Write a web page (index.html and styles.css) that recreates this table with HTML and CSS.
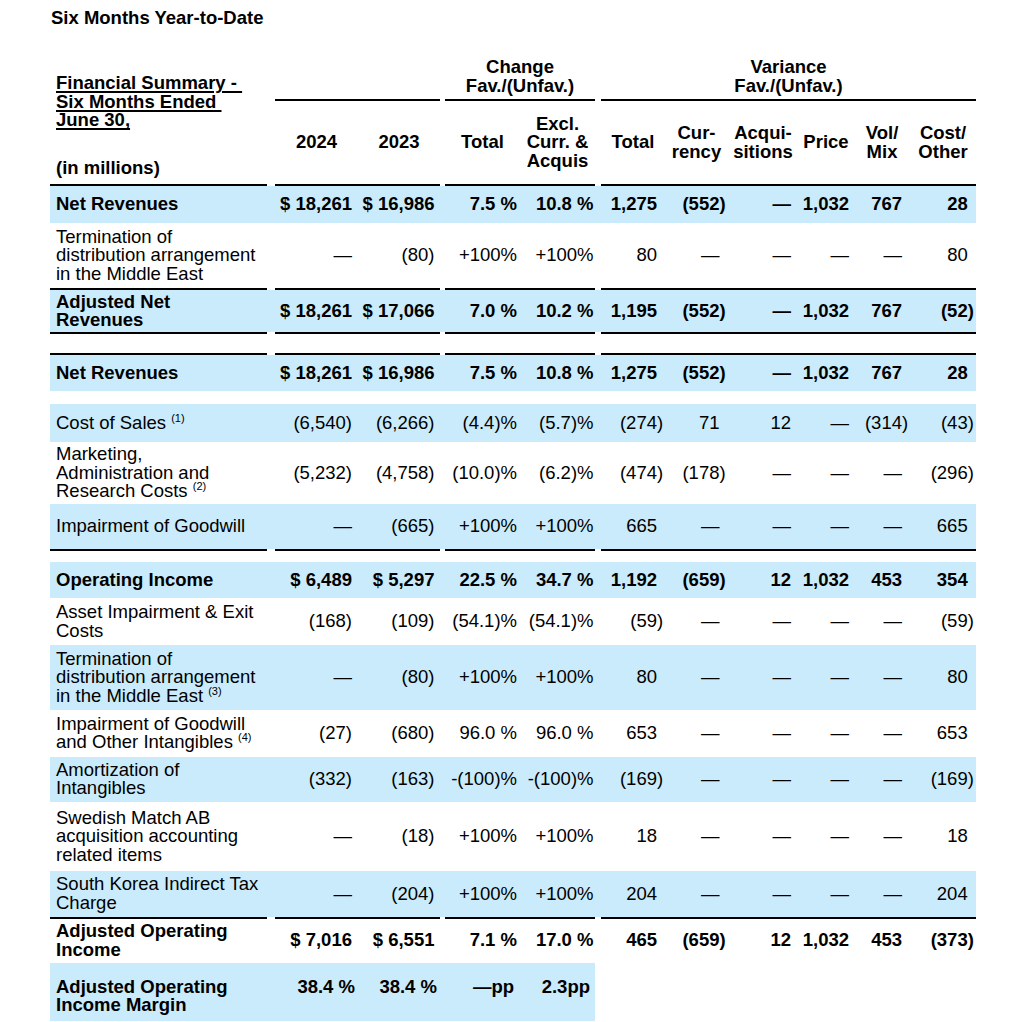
FILE: index.html
```html
<!DOCTYPE html>
<html lang="en">
<head>
<meta charset="utf-8">
<title>Six Months Year-to-Date</title>
<link rel="stylesheet" href="styles.css">
</head>
<body>
<div class="page">
  <div class="title">Six Months Year-to-Date</div>
  <table class="fin">
    <colgroup>
      <col class="c-lbl"><col class="c-g8"><col class="c-y24"><col class="c-y23"><col class="c-g5">
      <col class="c-ct"><col class="c-ce"><col class="c-g6"><col class="c-vt"><col class="c-cur">
      <col class="c-acq"><col class="c-pr"><col class="c-vol"><col class="c-cost">
    </colgroup>
    <tbody>
      <tr class="grouphead">
        <td class="lbl-head" rowspan="3">
          <div class="fs"><span class="u">Financial Summary - </span><br><span class="u">Six Months Ended </span><br><span class="u">June 30,</span></div>
          <div class="units">(in millions)</div>
        </td>
        <td></td>
        <td colspan="2"></td>
        <td></td>
        <td colspan="2">Change<br>Fav./(Unfav.)</td>
        <td></td>
        <td colspan="6">Variance<br>Fav./(Unfav.)</td>
      </tr>
      <tr class="rule">
        <td></td><td class="ln" colspan="2"></td><td></td><td class="ln" colspan="2"></td><td></td><td class="ln" colspan="6"></td>
      </tr>
      <tr class="colhead">
        <td></td>
        <td>2024</td>
        <td>2023</td>
        <td></td>
        <td>Total</td>
        <td>Excl.<br>Curr. &amp;<br>Acquis</td>
        <td></td>
        <td>Total</td>
        <td>Cur-<br>rency</td>
        <td>Acqui-<br>sitions</td>
        <td>Price</td>
        <td>Vol/<br>Mix</td>
        <td>Cost/<br>Other</td>
      </tr>
      <tr class="rule">
        <td class="ln"></td><td></td><td class="ln" colspan="2"></td><td></td><td class="ln" colspan="2"></td><td></td><td class="ln" colspan="6"></td>
      </tr>

      <tr class="row bg b h-nr1">
        <td>Net Revenues</td><td></td><td>$ 18,261</td><td>$ 16,986</td><td></td><td>7.5 %</td><td>10.8 %</td><td></td>
        <td>1,275</td><td><span class="neg">(552)</span></td><td>—</td><td>1,032</td><td>767</td><td>28</td>
      </tr>
      <tr class="row h-term1">
        <td>Termination of<br>distribution arrangement<br>in the Middle East</td><td></td><td>—</td><td>(80)</td><td></td><td>+100%</td><td>+100%</td><td></td>
        <td>80</td><td>—</td><td>—</td><td>—</td><td>—</td><td>80</td>
      </tr>
      <tr class="rule">
        <td class="ln"></td><td></td><td class="ln" colspan="2"></td><td></td><td class="ln" colspan="2"></td><td></td><td class="ln" colspan="6"></td>
      </tr>
      <tr class="row bg b h-anr">
        <td>Adjusted Net<br>Revenues</td><td></td><td>$ 18,261</td><td>$ 17,066</td><td></td><td>7.0 %</td><td>10.2 %</td><td></td>
        <td>1,195</td><td><span class="neg">(552)</span></td><td>—</td><td>1,032</td><td>767</td><td><span class="neg">(52)</span></td>
      </tr>
      <tr class="rule">
        <td class="ln"></td><td></td><td class="ln" colspan="2"></td><td></td><td class="ln" colspan="2"></td><td></td><td class="ln" colspan="6"></td>
      </tr>
      <tr class="spacer sp-a"><td colspan="14"></td></tr>
      <tr class="rule">
        <td class="ln"></td><td></td><td class="ln" colspan="2"></td><td></td><td class="ln" colspan="2"></td><td></td><td class="ln" colspan="6"></td>
      </tr>
      <tr class="row bg b h-nr2">
        <td>Net Revenues</td><td></td><td>$ 18,261</td><td>$ 16,986</td><td></td><td>7.5 %</td><td>10.8 %</td><td></td>
        <td>1,275</td><td><span class="neg">(552)</span></td><td>—</td><td>1,032</td><td>767</td><td>28</td>
      </tr>
      <tr class="spacer sp-b"><td colspan="14"></td></tr>
      <tr class="row bg h-cos">
        <td>Cost of Sales <span class="fn">(1)</span></td><td></td><td>(6,540)</td><td>(6,266)</td><td></td><td>(4.4)%</td><td>(5.7)%</td><td></td>
        <td><span class="neg">(274)</span></td><td>71</td><td>12</td><td>—</td><td><span class="neg">(314)</span></td><td><span class="neg">(43)</span></td>
      </tr>
      <tr class="row h-mkt">
        <td>Marketing,<br>Administration and<br>Research Costs <span class="fn">(2)</span></td><td></td><td>(5,232)</td><td>(4,758)</td><td></td><td>(10.0)%</td><td>(6.2)%</td><td></td>
        <td><span class="neg">(474)</span></td><td><span class="neg">(178)</span></td><td>—</td><td>—</td><td>—</td><td><span class="neg">(296)</span></td>
      </tr>
      <tr class="row bg h-imp">
        <td>Impairment of Goodwill</td><td></td><td>—</td><td>(665)</td><td></td><td>+100%</td><td>+100%</td><td></td>
        <td>665</td><td>—</td><td>—</td><td>—</td><td>—</td><td>665</td>
      </tr>
      <tr class="rule">
        <td class="ln"></td><td></td><td class="ln" colspan="2"></td><td></td><td class="ln" colspan="2"></td><td></td><td class="ln" colspan="6"></td>
      </tr>
      <tr class="spacer sp-c"><td colspan="14"></td></tr>
      <tr class="row bg b h-oi">
        <td>Operating Income</td><td></td><td>$ 6,489</td><td>$ 5,297</td><td></td><td>22.5 %</td><td>34.7 %</td><td></td>
        <td>1,192</td><td><span class="neg">(659)</span></td><td>12</td><td>1,032</td><td>453</td><td>354</td>
      </tr>
      <tr class="row h-asset">
        <td>Asset Impairment &amp; Exit<br>Costs</td><td></td><td>(168)</td><td>(109)</td><td></td><td>(54.1)%</td><td>(54.1)%</td><td></td>
        <td><span class="neg">(59)</span></td><td>—</td><td>—</td><td>—</td><td>—</td><td><span class="neg">(59)</span></td>
      </tr>
      <tr class="row bg h-term2">
        <td>Termination of<br>distribution arrangement<br>in the Middle East <span class="fn">(3)</span></td><td></td><td>—</td><td>(80)</td><td></td><td>+100%</td><td>+100%</td><td></td>
        <td>80</td><td>—</td><td>—</td><td>—</td><td>—</td><td>80</td>
      </tr>
      <tr class="row h-impo">
        <td>Impairment of Goodwill<br>and Other Intangibles <span class="fn">(4)</span></td><td></td><td>(27)</td><td>(680)</td><td></td><td>96.0 %</td><td>96.0 %</td><td></td>
        <td>653</td><td>—</td><td>—</td><td>—</td><td>—</td><td>653</td>
      </tr>
      <tr class="row bg h-amort">
        <td>Amortization of<br>Intangibles</td><td></td><td>(332)</td><td>(163)</td><td></td><td>-(100)%</td><td>-(100)%</td><td></td>
        <td><span class="neg">(169)</span></td><td>—</td><td>—</td><td>—</td><td>—</td><td><span class="neg">(169)</span></td>
      </tr>
      <tr class="row h-swm">
        <td>Swedish Match AB<br>acquisition accounting<br>related items</td><td></td><td>—</td><td>(18)</td><td></td><td>+100%</td><td>+100%</td><td></td>
        <td>18</td><td>—</td><td>—</td><td>—</td><td>—</td><td>18</td>
      </tr>
      <tr class="row bg h-sk">
        <td>South Korea Indirect Tax<br>Charge</td><td></td><td>—</td><td>(204)</td><td></td><td>+100%</td><td>+100%</td><td></td>
        <td>204</td><td>—</td><td>—</td><td>—</td><td>—</td><td>204</td>
      </tr>
      <tr class="rule">
        <td class="ln"></td><td></td><td class="ln" colspan="2"></td><td></td><td class="ln" colspan="2"></td><td></td><td class="ln" colspan="6"></td>
      </tr>
      <tr class="row b h-aoi">
        <td>Adjusted Operating<br>Income</td><td></td><td>$ 7,016</td><td>$ 6,551</td><td></td><td>7.1 %</td><td>17.0 %</td><td></td>
        <td>465</td><td><span class="neg">(659)</span></td><td>12</td><td>1,032</td><td>453</td><td><span class="neg">(373)</span></td>
      </tr>
      <tr class="row bg b margin">
        <td>Adjusted Operating<br>Income Margin</td><td></td><td>38.4 %</td><td>38.4 %</td><td></td><td>—pp</td><td>2.3pp</td>
        <td class="nobg"></td><td class="nobg"></td><td class="nobg"></td><td class="nobg"></td><td class="nobg"></td><td class="nobg"></td><td class="nobg"></td>
      </tr>
    </tbody>
  </table>
</div>
</body>
</html>
```

FILE: styles.css
```css
html, body {
  margin: 0;
  padding: 0;
  background: #ffffff;
}

body {
  font-family: "Liberation Sans", Arial, Helvetica, sans-serif;
  font-size: 18.5px;
  line-height: 18.6px;
  color: #000000;
}

.page {
  padding-top: 8.6px;
}

.title {
  margin-left: 51px;
  font-weight: bold;
}

.fin {
  margin: 30.8px 0 0 50px;
  width: 926px;
  table-layout: fixed;
  border-collapse: collapse;
  border-spacing: 0;
}

.c-lbl { width: 217px; }
.c-g8 { width: 8px; }
.c-y24 { width: 83px; }
.c-y23 { width: 82px; }
.c-g5 { width: 5px; }
.c-ct { width: 75px; }
.c-ce { width: 75px; }
.c-g6 { width: 6px; }
.c-vt { width: 64px; }
.c-cur { width: 63px; }
.c-acq { width: 70px; }
.c-pr { width: 56px; }
.c-vol { width: 56px; }
.c-cost { width: 66px; }

.fin td {
  padding: 0;
  vertical-align: middle;
  white-space: nowrap;
  text-align: right;
}

/* header */
.fin tr.grouphead td {
  vertical-align: bottom;
  text-align: center;
  font-weight: bold;
  padding-bottom: 4px;
}

.fin tr.grouphead td.lbl-head {
  text-align: left;
  vertical-align: bottom;
  padding: 0 0 7px 6px;
}

.u {
  white-space: pre;
  text-decoration: underline;
  text-decoration-thickness: 1.5px;
  text-underline-offset: 2px;
}

.units {
  margin-top: 28.6px;
}

.fin tr.colhead {
  height: 83px;
}

.fin tr.colhead td {
  text-align: center;
  font-weight: bold;
}

/* rules and spacers */
.fin tr.rule {
  height: 2px;
}

.fin tr.rule td,
.fin tr.spacer td {
  font-size: 0;
  line-height: 0;
  padding: 0;
}

.fin tr.rule td.ln {
  background: #000000;
}

.fin tr.sp-a { height: 19px; }
.fin tr.sp-b { height: 12.7px; }
.fin tr.sp-c { height: 11.4px; }

/* body rows */
.fin tr.row td:nth-child(1) { text-align: left; padding-left: 6px; }
.fin tr.row td:nth-child(3) { padding-right: 6px; }
.fin tr.row td:nth-child(4) { padding-right: 5.5px; }
.fin tr.row td:nth-child(6) { padding-right: 3px; }
.fin tr.row td:nth-child(7) { padding-right: 1.5px; }
.fin tr.row td:nth-child(9) { padding-right: 8px; }
.fin tr.row td:nth-child(10) { padding-right: 8.5px; }
.fin tr.row td:nth-child(11) { padding-right: 7px; }
.fin tr.row td:nth-child(12) { padding-right: 5px; }
.fin tr.row td:nth-child(13) { padding-right: 8px; }
.fin tr.row td:nth-child(14) { padding-right: 8.3px; }

.fin tr.bg td {
  background: #caebfb;
}

.fin tr.b td {
  font-weight: bold;
}

.neg {
  margin-right: -0.333em;
}

.fn {
  font-size: 11px;
  line-height: 0;
  vertical-align: 7px;
  font-weight: normal;
}

.h-nr1 { height: 36.7px; }
.h-term1 { height: 65.6px; }
.h-anr { height: 42px; }
.h-nr2 { height: 36px; }
.h-cos { height: 37.7px; }
.h-mkt { height: 62.3px; }
.h-imp { height: 44.7px; }
.h-oi { height: 36px; }
.h-asset { height: 46.7px; }
.h-term2 { height: 65px; }
.h-impo { height: 46.7px; }
.h-amort { height: 45.8px; }
.h-swm { height: 68.5px; }
.h-sk { height: 46px; }
.h-aoi { height: 43.7px; }

.fin tr.margin {
  height: 58.5px;
}

.fin tr.margin td {
  vertical-align: top;
  padding-top: 15px;
}

.fin tr.margin td:nth-child(3) { padding-right: 3px; }
.fin tr.margin td:nth-child(4) { padding-right: 3px; }
.fin tr.margin td:nth-child(6) { padding-right: 6px; }
.fin tr.margin td:nth-child(7) { padding-right: 5px; }

.fin tr.margin td.nobg {
  background: transparent;
}
```
